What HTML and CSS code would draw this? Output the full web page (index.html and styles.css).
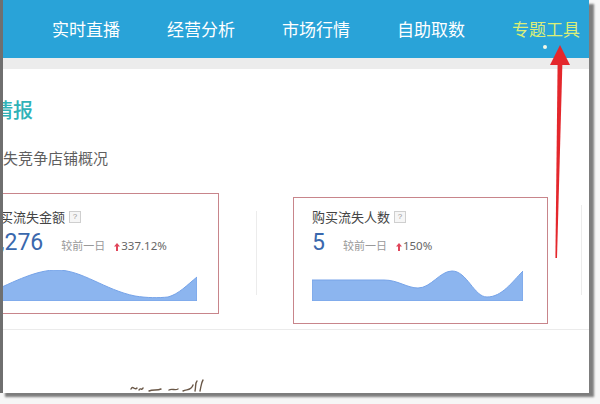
FILE: index.html
```html
<!DOCTYPE html>
<html lang="zh">
<head>
<meta charset="utf-8">
<title>专题工具</title>
<link rel="stylesheet" href="styles.css">
</head>
<body>
<div class="frame">
  <header class="topnav">
    <nav class="nav">
      <span class="nav-item">实时直播</span>
      <span class="nav-item">经营分析</span>
      <span class="nav-item">市场行情</span>
      <span class="nav-item">自助取数</span>
      <span class="nav-item active">专题工具</span>
    </nav>
  </header>
  <div class="strip"></div>
  <main class="content">
    <h1 class="title">情报</h1>
    <h2 class="subtitle">失竞争店铺概况</h2>
    <div class="cards">
      <section class="card card-a">
        <div class="card-title">购买流失金额<span class="help">?</span></div>
        <div class="metric">
          <span class="num">1,276</span>
          <span class="cmp">较前一日</span>
          <svg class="up" width="6" height="8" viewBox="0 0 6 8"><path d="M3 0 L6 3.5 L4 3.5 L4 8 L2 8 L2 3.5 L0 3.5 Z" fill="#e0455a"/></svg>
          <span class="pct">337.12%</span>
        </div>
        <svg class="spark spark-a" width="210" height="31" viewBox="0 0 210 31">
          <path d="M0 24 C 30 10, 50 0, 70 0 C 95 0, 118 20, 148 26 C 160 28, 172 28, 181 27 C 192 24, 200 15, 210 7 L 210 31 L 0 31 Z" fill="#8cb5ef" stroke="#76a3e8" stroke-width="1"/>
        </svg>
      </section>
      <div class="sep sep-a"></div>
      <section class="card card-b">
        <div class="card-title">购买流失人数<span class="help">?</span></div>
        <div class="metric">
          <span class="num">5</span>
          <span class="cmp">较前一日</span>
          <svg class="up" width="6" height="8" viewBox="0 0 6 8"><path d="M3 0 L6 3.5 L4 3.5 L4 8 L2 8 L2 3.5 L0 3.5 Z" fill="#e0455a"/></svg>
          <span class="pct">150%</span>
        </div>
        <svg class="spark spark-b" width="211" height="31" viewBox="0 0 211 31">
          <path d="M0 10 L 72 10 C 86 10, 95 18, 106 18 C 119 18, 128 1, 140 1 C 155 1, 162 27, 175 27 C 190 27, 200 12, 211 1 L 211 31 L 0 31 Z" fill="#8cb5ef" stroke="#76a3e8" stroke-width="1"/>
        </svg>
      </section>
      <div class="sep sep-b"></div>
    </div>
    <div class="rule"></div>
    <svg class="scribble" width="80" height="14" viewBox="0 0 80 14">
      <path d="M2 10 C 4 6, 6 12, 8 9 M10 11 C 11 8, 13 12, 14 9 M20 12 C 24 10, 28 12, 32 10 M40 11 C 43 9, 46 12, 49 10 M54 12 C 58 10, 62 12, 64 6 M66 12 C 67 8, 66 4, 68 2 M71 12 C 72 8, 72 4, 74 1" fill="none" stroke="#6a5848" stroke-width="1.4" stroke-linecap="round"/>
    </svg>
  </main>
  <svg class="annot-arrow" width="26" height="224" viewBox="0 0 26 224">
    <path d="M14 1 L24 21 L4 21 Z" fill="#e4272c"/>
    <path d="M11.6 19 L16.4 19 L11 214 L9.4 214 Z" fill="#e4272c"/>
  </svg>
</div>
</body>
</html>
```

FILE: styles.css
```css
html, body {
  margin: 0;
  padding: 0;
}

body {
  width: 600px;
  height: 404px;
  overflow: hidden;
  background: #f6f6f6;
  font-family: "Noto Sans CJK SC", "Noto Sans", sans-serif;
}

.frame {
  position: relative;
  width: 586px;
  height: 393px;
  border-left: 3px solid #6f6f6f;
  box-shadow: 5px 4px 2px rgba(60, 60, 60, 0.65);
  background: #fff;
  overflow: hidden;
}

.topnav {
  height: 58px;
  background: #29a3d8;
}

.nav {
  display: flex;
  align-items: center;
  gap: 47px;
  height: 58px;
  padding-left: 49px;
}

.nav-item {
  position: relative;
  font-size: 17px;
  line-height: 20px;
  color: #ffffff;
  white-space: nowrap;
}

.nav-item.active {
  color: #dcee78;
}

.nav-item.active::after {
  content: "";
  position: absolute;
  left: calc(50% - 3px);
  top: 26px;
  width: 4px;
  height: 4px;
  border-radius: 50%;
  background: #f2f8e8;
}

.strip {
  height: 11px;
  background: #ececec;
}

.content {
  display: flex;
  flex-direction: column;
  align-items: flex-start;
}

.title {
  margin: 29px 0 0 -10px;
  font-size: 20px;
  line-height: 24px;
  font-weight: 500;
  color: #2fb2b8;
  white-space: nowrap;
}

.subtitle {
  margin: 26px 0 0 0;
  font-size: 15px;
  line-height: 20px;
  font-weight: normal;
  color: #5f5f5f;
  white-space: nowrap;
}

.cards {
  display: flex;
  align-items: flex-start;
  margin-top: 25px;
  margin-left: -35px;
}

.card {
  box-sizing: border-box;
  border: 1px solid #c8858b;
  flex: none;
}

.card-a {
  width: 251px;
  padding: 15px 0 12px 18px;
}

.card-b {
  width: 255px;
  margin-top: 4px;
  padding: 11px 0 22px 18px;
}

.card-title {
  display: flex;
  align-items: center;
  font-size: 13px;
  line-height: 16px;
  color: #444;
  white-space: nowrap;
}

.help {
  box-sizing: border-box;
  display: inline-block;
  width: 12px;
  height: 12px;
  margin-left: 4px;
  border: 1px solid #cfcfcf;
  background: #f6f6f6;
  font-family: "Liberation Sans", sans-serif;
  font-size: 8px;
  line-height: 10px;
  text-align: center;
  color: #999;
}

.metric {
  display: flex;
  align-items: baseline;
  height: 28px;
  margin-top: 4px;
  white-space: nowrap;
}

.num {
  font-family: Roboto, "Noto Sans", sans-serif;
  font-weight: 400;
  font-size: 23px;
  line-height: 28px;
  color: #3a68ad;
  margin-right: 18px;
}

.cmp {
  font-size: 11px;
  color: #999;
  margin-right: 9px;
}

.up {
  align-self: center;
  margin-top: 8px;
  margin-right: 1px;
}

.pct {
  font-family: "Noto Sans", sans-serif;
  font-size: 11.5px;
  font-weight: 400;
  color: #666;
}

.spark {
  display: block;
  margin-top: 13px;
}

.sep {
  flex: none;
  width: 1px;
  background: #ececec;
}

.sep-a {
  height: 84px;
  margin: 18px 36px 0 37px;
}

.sep-b {
  height: 90px;
  margin: 12px 0 0 33px;
}

.rule {
  align-self: stretch;
  height: 1px;
  margin-top: 5px;
  background: #ebebeb;
}

.scribble {
  display: block;
  margin: 49px 0 0 126px;
}

.annot-arrow {
  position: absolute;
  left: 543px;
  top: 44px;
}
```
